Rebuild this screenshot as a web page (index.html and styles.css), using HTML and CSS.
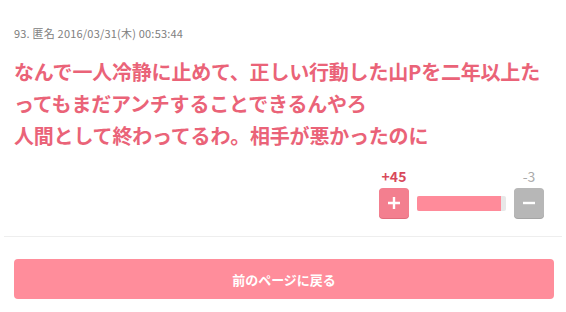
FILE: index.html
```html
<!DOCTYPE html>
<html>
<head>
    <meta charset="utf-8">
    <title>コメント</title>
    <link rel="stylesheet" href="styles.css">
</head>
<body>
    <div class="post">
        <div class="meta">93. 匿名 2016/03/31(木) 00:53:44</div>
        <p class="body">なんで一人冷静に止めて、正しい行動した山Pを二年以上たってもまだアンチすることできるんやろ<br>人間として終わってるわ。相手が悪かったのに</p>

        <!-- vote widget -->
        <div class="vote">
            <span class="count plus-count">+45</span>
            <span></span>
            <span class="count minus-count">-3</span>
            <button class="vote-btn plus" aria-label="plus">
                <svg width="14" height="14" viewBox="0 0 14 14"><path d="M7 1v12M1 7h12" stroke="#fff" stroke-width="2.4"/></svg>
            </button>
            <div class="bar"><div class="bar-fill" style="width: 94%;"></div></div>
            <button class="vote-btn minus" aria-label="minus">
                <svg width="14" height="14" viewBox="0 0 14 14"><path d="M1 7h12" stroke="#fff" stroke-width="2.4"/></svg>
            </button>
        </div>
    </div>

    <div class="footer">
        <button class="back">前のページに戻る</button>
    </div>
</body>
</html>
```
FILE: styles.css
```css
body {
    margin: 0;
    background: #fff;
    font-family: "Noto Sans CJK JP", "Noto Sans", sans-serif;
}

.post {
    padding: 26px 22px 18px 10px;
    border-bottom: 1px solid #eeeeee;
    margin: 0 4px;
}

.meta {
    font-size: 11px;
    line-height: 14px;
    color: #808080;
    letter-spacing: 0.2px;
}

.body {
    margin: 16px 0 0;
    font-size: 20px;
    line-height: 32px;
    font-weight: bold;
    color: #ea6378;
    letter-spacing: -0.2px;
}

.vote {
    display: grid;
    grid-template-columns: 30px 89px 30px;
    grid-template-rows: 14px 30px;
    column-gap: 8px;
    row-gap: 5px;
    justify-content: end;
    margin-top: 17px;
    margin-right: -4px;
}

.count {
    font-size: 14px;
    line-height: 14px;
    font-weight: bold;
    text-align: center;
}

.plus-count {
    color: #d8485a;
}

.minus-count {
    color: #aaaaaa;
    font-weight: normal;
}

.vote-btn {
    width: 30px;
    height: 30px;
    padding: 0;
    border: none;
    border-radius: 4px;
    display: flex;
    align-items: center;
    justify-content: center;
    cursor: pointer;
}

.vote-btn.plus {
    background: #f37f8f;
    box-shadow: 0 1px 0 #e26c7c;
}

.vote-btn.minus {
    background: #b7b7b7;
    box-shadow: 0 1px 0 #a5a5a5;
}

.bar {
    align-self: center;
    height: 15px;
    background: #e8e8e8;
    border-radius: 2px;
    overflow: hidden;
}

.bar-fill {
    height: 100%;
    background: #ff8b9a;
}

.footer {
    padding: 22px 12px 0 14px;
}

.back {
    display: block;
    width: 100%;
    height: 40px;
    border: none;
    border-radius: 4px;
    background: #ff8d9b;
    color: #fff;
    font-family: "Noto Sans CJK JP", "Noto Sans", sans-serif;
    font-size: 13px;
    font-weight: bold;
    cursor: pointer;
}
```
